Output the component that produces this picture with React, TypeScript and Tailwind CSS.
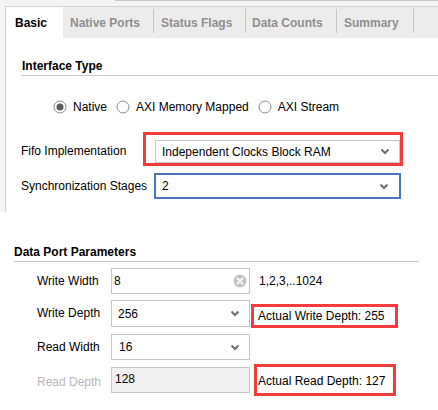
import React from 'react';

const font = { fontFamily: '"Liberation Sans", Arial, sans-serif' };

function Chevron() {
  return (
    <svg width="10" height="7" viewBox="0 0 10 7" className="shrink-0">
      <polyline points="1.5,1.5 5,5 8.5,1.5" fill="none" stroke="#6e6e6e" strokeWidth="2" />
    </svg>
  );
}

function ClearIcon() {
  return (
    <svg width="14" height="14" viewBox="0 0 14 14" className="shrink-0">
      <circle cx="7" cy="7" r="6.5" fill="#c3c3c3" />
      <path d="M4.5 4.5 L9.5 9.5 M9.5 4.5 L4.5 9.5" stroke="#ffffff" strokeWidth="1.8" strokeLinecap="round" />
    </svg>
  );
}

function Radio({ checked }: { checked?: boolean }) {
  return (
    <svg width="14" height="14" viewBox="0 0 14 14" className="shrink-0">
      <circle cx="7" cy="7" r="6" fill="#ffffff" stroke="#8c8c8c" strokeWidth="1" />
      {checked && <circle cx="7" cy="7" r="3.5" fill="#5a5a5a" />}
    </svg>
  );
}

const tabs = [
  { label: 'Native Ports', w: 'w-[90px]', pl: 'pl-[7px]' },
  { label: 'Status Flags', w: 'w-[91px]', pl: 'pl-[7px]' },
  { label: 'Data Counts', w: 'w-[90px]', pl: 'pl-[6px]' },
  { label: 'Summary', w: 'w-[76px]', pl: 'pl-[7px]' },
];

export default function App() {
  return (
    <div className="w-[438px] h-[410px] bg-white text-[12px] leading-[14px] text-black overflow-hidden" style={font}>

      {/* Basic panel */}
      <div className="h-[212px] bg-[#f4f4f4] flex flex-col">
        <div className="h-px ml-[115px] bg-[#c8c8c8]" />
        <div className="mt-[5px] ml-[5px] flex-1 border-l border-t border-[#d2d2d2] bg-white flex flex-col">

          {/* Tabs */}
          <div className="h-[31px] bg-[#ececec] flex">
            <div className="w-[57px] bg-white pl-[9px] flex items-center font-bold">Basic</div>
            {tabs.map((t) => (
              <React.Fragment key={t.label}>
                <div className={`${t.w} ${t.pl} flex items-center font-bold text-[#8f8f8f]`}>{t.label}</div>
                <div className="w-px h-[24px] mt-[2px] bg-[#c4c4c4]" />
              </React.Fragment>
            ))}
          </div>

          {/* Interface Type */}
          <div className="ml-[16px] mt-[21px] pb-[2px] border-b border-[#c8c8c8] font-bold">Interface Type</div>

          <div className="ml-[47px] mt-[23px] h-[16px] flex items-center">
            <Radio checked />
            <span className="ml-[6px] mr-[9px]">Native</span>
            <Radio />
            <span className="ml-[6px] mr-[9px]">AXI Memory Mapped</span>
            <Radio />
            <span className="ml-[6px]">AXI Stream</span>
          </div>

          <div className="ml-[15px] mt-[17px] flex items-center">
            <div className="w-[122px] pt-[4px]">Fifo Implementation</div>
            <div className="w-[260px] h-[34px] border-[3px] border-[#f03c3c] pl-[9px] pt-[5px]">
              <div className="w-[245px] h-[23px] border border-[#c6c6c6] bg-white flex items-center justify-between pl-[6px] pr-[9px]">
                <span>Independent Clocks Block RAM</span>
                <Chevron />
              </div>
            </div>
          </div>

          <div className="ml-[15px] mt-[7px] flex items-center">
            <div className="w-[133px]">Synchronization Stages</div>
            <div className="w-[247px] h-[26px] border-2 border-[#4a74c6] bg-white flex items-center justify-between pl-[6px] pr-[10px]">
              <span>2</span>
              <Chevron />
            </div>
          </div>
        </div>
      </div>

      {/* Data Port Parameters */}
      <div className="ml-[14px] mt-[33px] w-[405px] pb-[2px] border-b border-[#c8c8c8] font-bold">Data Port Parameters</div>

      <div className="ml-[37px] flex flex-col">
        <div className="mt-[6px] flex items-center">
          <div className="w-[74px]">Write Width</div>
          <div className="w-[139px] h-[26px] border border-[#c6c6c6] flex items-center justify-between pl-[2px] pr-[2px]">
            <span>8</span>
            <ClearIcon />
          </div>
          <span className="ml-[9px]">1,2,3,..1024</span>
        </div>

        <div className="mt-[6px] flex items-start">
          <div className="w-[74px] h-[26px] flex items-center">Write Depth</div>
          <div className="w-[139px] h-[27px] border border-[#c6c6c6] flex items-center justify-between pl-[6px] pr-[9px]">
            <span>256</span>
            <Chevron />
          </div>
          <div className="ml-[1px] mt-[4px] w-[147px] h-[24px] border-[3px] border-[#f03c3c] pl-[4px] flex items-center">
            Actual Write Depth: 255
          </div>
        </div>

        <div className="mt-[6px] flex items-center">
          <div className="w-[74px]">Read Width</div>
          <div className="w-[139px] h-[26px] border border-[#c6c6c6] flex items-center justify-between pl-[7px] pr-[9px]">
            <span>16</span>
            <Chevron />
          </div>
        </div>

        <div className="mt-[4px] flex items-center">
          <div className="w-[74px] pt-[3px] text-[#b8b8b8]">Read Depth</div>
          <div className="w-[139px] h-[26px] border border-[#c6c6c6] bg-[#f0f0f0] flex items-center pl-[3px] pb-[2px]">
            128
          </div>
          <div className="ml-[4px] w-[142px] h-[32px] border-[3px] border-[#f03c3c] pl-[1px] pt-[2px] flex items-center">
            Actual Read Depth: 127
          </div>
        </div>
      </div>
    </div>
  );
}
